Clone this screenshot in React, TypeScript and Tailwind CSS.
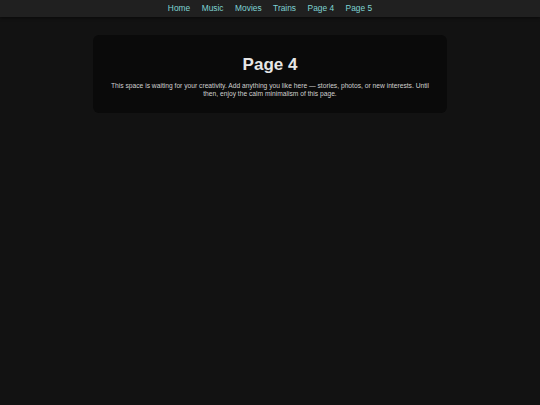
const LINKS = ['Home', 'Music', 'Movies', 'Trains', 'Page 4', 'Page 5'];

export default function App() {
  return (
    <div className="min-h-[405px] bg-[#121212] font-['Liberation_Sans',Arial,sans-serif]">
      <nav className="flex h-[17px] items-center justify-center gap-[11.5px] bg-[#202020] shadow-[0_1px_3px_rgba(0,0,0,0.5)]">
        {LINKS.map((l) => (
          <a key={l} href="#" className="text-[8.4px] leading-none text-[#7fd3d3]">
            {l}
          </a>
        ))}
      </nav>
      <main className="flex justify-center pt-[18px]">
        <div className="w-[354px] rounded-[6px] bg-[#0a0a0a] px-[12px] pt-[19px] pb-[15px] text-center">
          <h1 className="text-[17px] font-bold leading-[22px] text-[#e6e6e6]">Page 4</h1>
          <p className="mt-[6px] text-[6.7px] leading-[8px] text-[#d0d0d0]">
            This space is waiting for your creativity. Add anything you like here — stories, photos, or new interests. Until then, enjoy the calm minimalism of this page.
          </p>
        </div>
      </main>
    </div>
  );
}
